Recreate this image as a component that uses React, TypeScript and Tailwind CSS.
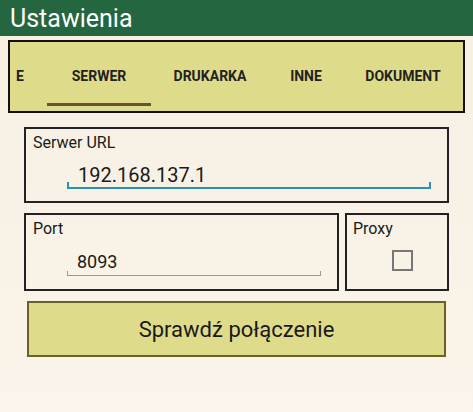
export default function App() {
  const tabs = ['E', 'SERWER', 'DRUKARKA', 'INNE', 'DOKUMENT'];
  return (
    <div className="w-[473px] h-[412px] overflow-hidden bg-gradient-to-b from-[#f6efe2] to-[#faf4ea] font-[Roboto,sans-serif] text-[#1a1a1a]">
      <div className="h-[36px] bg-[#246640] flex items-center pl-[10px]">
        <span className="text-white text-[25px] leading-none">Ustawienia</span>
      </div>
      <div className="mx-[8px] mt-[4px] h-[73px] border-2 border-[#111] bg-[#dedc8a] flex overflow-hidden">
        {tabs.map((t, i) => (
          <div
            key={t}
            className={`relative flex items-center justify-center h-full shrink-0 text-[14px] font-bold text-[#222] ${
              i === 0 ? 'w-[20px] justify-start pl-[6px]' : i === 1 ? 'w-[104px] ml-[17px]' : i === 2 ? 'w-[118px]' : i === 3 ? 'w-[74px]' : 'w-[120px]'
            }`}
          >
            {t}
            {i === 1 && <div className="absolute left-0 right-0 bottom-[5px] h-[3px] bg-[#6b5134]" />}
          </div>
        ))}
      </div>
      <div className="mx-[24px] mt-[14px] h-[76px] border-2 border-[#222] pl-[7px] pt-[2px]">
        <div className="text-[16px]">Serwer URL</div>
        <div className="ml-[34px] mr-[16px] mt-[8px] pl-[11px] text-[20px] leading-[24px] border-b-2 border-[#2e8fb5] relative">
          192.168.137.1
          <div className="absolute left-0 bottom-0 w-[2px] h-[5px] bg-[#2e8fb5]" />
          <div className="absolute right-0 bottom-0 w-[2px] h-[5px] bg-[#2e8fb5]" />
        </div>
      </div>
      <div className="mx-[24px] mt-[10px] flex gap-[6px]">
        <div className="w-[315px] h-[78px] border-2 border-[#222] pl-[7px] pt-[2px]">
          <div className="text-[16px]">Port</div>
          <div className="ml-[34px] mr-[16px] mt-[10px] pl-[10px] pb-[2px] text-[18px] leading-[22px] border-b border-[#999] relative">
            8093
            <div className="absolute left-0 bottom-0 w-px h-[4px] bg-[#999]" />
            <div className="absolute right-0 bottom-0 w-px h-[4px] bg-[#999]" />
          </div>
        </div>
        <div className="flex-1 h-[78px] border-2 border-[#222] pl-[6px] pt-[2px]">
          <div className="text-[16px]">Proxy</div>
          <div className="ml-[39px] mt-[9px] w-[21px] h-[21px] border-2 border-[#777]" />
        </div>
      </div>
      <div className="mx-[27px] mt-[10px] h-[56px] bg-[#dedc8a] border-2 border-[#6b5f2a] flex items-center justify-center text-[22px]">
        Sprawdź połączenie
      </div>
    </div>
  );
}
